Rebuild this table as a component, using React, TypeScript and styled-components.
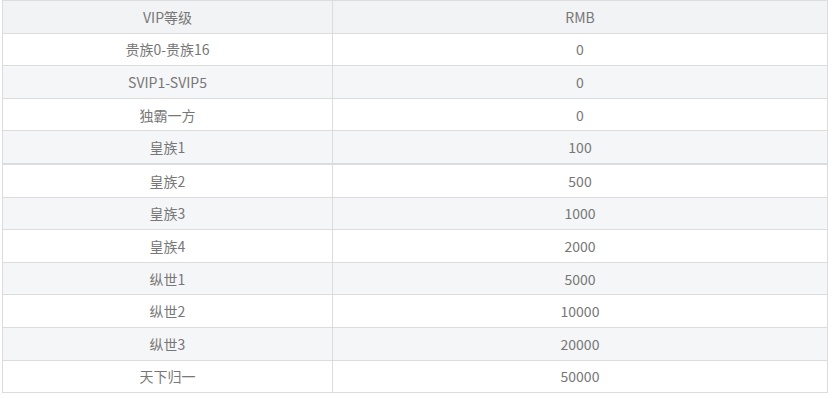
import React from 'react';
import styled, { createGlobalStyle } from 'styled-components';

const GlobalStyle = createGlobalStyle`
  html, body {
    margin: 0;
    padding: 0;
    background: #fff;
  }
`;

const rows: [string, string][] = [
  ['贵族0-贵族16', '0'],
  ['SVIP1-SVIP5', '0'],
  ['独霸一方', '0'],
  ['皇族1', '100'],
  ['皇族2', '500'],
  ['皇族3', '1000'],
  ['皇族4', '2000'],
  ['纵世1', '5000'],
  ['纵世2', '10000'],
  ['纵世3', '20000'],
  ['天下归一', '50000'],
];

export default function App(): JSX.Element {
  return <>
    <GlobalStyle />
    <Wrap>
      <Table>
        <colgroup>
          <col style={{ width: '40%' }} />
          <col />
        </colgroup>
        <thead>
          <tr>
            <Th>VIP等级</Th>
            <Th>RMB</Th>
          </tr>
        </thead>
        <tbody>
          {rows.map(([level, rmb], i) => (
            <Row key={level} $striped={i % 2 === 1} $thick={i === 3}>
              <Td>{level}</Td>
              <Td>{rmb}</Td>
            </Row>
          ))}
        </tbody>
      </Table>
    </Wrap>
  </>;
}

const Wrap = styled.div`
  padding: 0 4px 0 2px;
`;

const Table = styled.table`
  width: 100%;
  border-collapse: collapse;
  table-layout: fixed;
  font-family: "Microsoft YaHei", "Noto Sans CJK SC", "Noto Sans", sans-serif;
  font-size: 14px;
  color: #777;
`;

const Th = styled.th`
  height: 31.6px;
  padding: 0;
  font-weight: normal;
  text-align: center;
  background: #f2f3f5;
  border: 1px solid #dcdcdc;
`;

const Row = styled.tr<{ $striped: boolean; $thick: boolean }>`
  background: ${p => (p.$striped ? '#f5f6f8' : '#fff')};
  border-bottom: ${p => (p.$thick ? '2px' : '1px')} solid #dcdcdc;
`;

const Td = styled.td`
  height: 31.6px;
  padding: 0;
  text-align: center;
  border: 1px solid #dcdcdc;
  border-bottom: inherit;
`;
